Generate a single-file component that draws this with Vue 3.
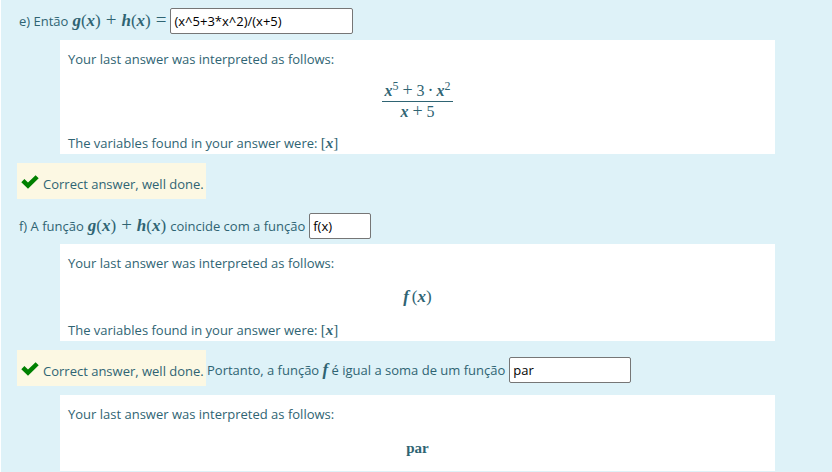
<script setup>
import { ref } from 'vue'

const sumAnswer = ref('(x^5+3*x^2)/(x+5)')
const functionAnswer = ref('f(x)')
const parityAnswer = ref('par')
</script>

<template>
  <main class="question">
    <div class="line first">
      <label for="sum">e) Então</label>
      <span class="math"><i>g</i>(<i>x</i>)<b class="op">+</b><i>h</i>(<i>x</i>)<b class="op last">=</b></span>
      <input id="sum" v-model="sumAnswer" class="wide" type="text" />
    </div>

    <section class="panel">
      <p>Your last answer was interpreted as follows:</p>
      <div class="display tall">
        <div class="math fraction">
          <span class="top"><i>x</i><sup>5</sup><b class="op">+</b>3<b class="op dot">·</b><i>x</i><sup>2</sup></span>
          <span class="bottom"><i>x</i><b class="op">+</b>5</span>
        </div>
      </div>
      <p>The variables found in your answer were: <span class="math small">[<i>x</i>]</span></p>
    </section>

    <div class="line result">
      <div class="feedback">
        <svg viewBox="0 0 18 14" aria-hidden="true"><path d="M0.3 7.2 3.4 4.1 7 7.4 14.6 0.2 17.7 3.2 7 13.8Z" /></svg>
        <span>Correct answer, well done.</span>
      </div>
    </div>

    <div class="line second">
      <label for="function">f) A função</label>
      <span class="math"><i>g</i>(<i>x</i>)<b class="op">+</b><i>h</i>(<i>x</i>)</span>
      <span>coincide com a função</span>
      <input id="function" v-model="functionAnswer" class="narrow" type="text" />
    </div>

    <section class="panel">
      <p>Your last answer was interpreted as follows:</p>
      <div class="display"><span class="math"><i>f</i>&#8202;&#8202;(<i>x</i>)</span></div>
      <p>The variables found in your answer were: <span class="math small">[<i>x</i>]</span></p>
    </section>

    <div class="line result">
      <div class="feedback">
        <svg viewBox="0 0 18 14" aria-hidden="true"><path d="M0.3 7.2 3.4 4.1 7 7.4 14.6 0.2 17.7 3.2 7 13.8Z" /></svg>
        <span>Correct answer, well done.</span>
      </div>
      <div class="sentence">
        <label for="parity">Portanto, a função <span class="math"><i>f</i></span> é igual a soma de um função</label>
        <input id="parity" v-model="parityAnswer" class="medium" type="text" />
      </div>
    </div>

    <section class="panel">
      <p>Your last answer was interpreted as follows:</p>
      <div class="display"><span class="math word">par</span></div>
    </section>
  </main>
</template>

<style>
body {
  background: #fff;
}
</style>

<style scoped>
.question {
  margin-left: 1px;
  padding-bottom: 1px;
  background: #def2f8;
  color: #2f6473;
  font-family: "Open Sans", "Segoe UI", sans-serif;
  font-size: 13px;
  line-height: 20px;
}

.line {
  display: flex;
  box-sizing: border-box;
  align-items: center;
  gap: 4px;
  padding-left: 18px;
  white-space: nowrap;
}

.first {
  height: 40px;
  padding-top: 1px;
}

.second {
  height: 36px;
}

.result {
  gap: 1px;
  padding: 9px 0 9px 16px;
}

.sentence {
  display: flex;
  align-items: center;
  gap: 4px;
  padding-top: 4px;
}

.feedback {
  display: flex;
  flex: none;
  box-sizing: border-box;
  align-items: center;
  gap: 4px;
  width: 189px;
  height: 36px;
  padding: 5px 0 0 4px;
  background: #fcf8e3;
}

.feedback svg {
  flex: none;
  width: 18px;
  height: 14px;
  margin-bottom: 4px;
  fill: #008000;
}

input {
  box-sizing: border-box;
  height: 26px;
  padding: 1px 3px;
  border: 1px solid #767676;
  border-radius: 2px;
  background: #fff;
  color: #000;
  font: inherit;
}

.wide {
  width: 183px;
}

.medium {
  width: 122px;
}

.narrow {
  width: 62px;
}

.panel {
  margin: 0 57px 0 59px;
  padding: 9px 8px 0;
  background: #fff;
}

.panel p {
  height: 20px;
  margin: 0;
}

.display {
  display: flex;
  align-items: center;
  justify-content: center;
  height: 47px;
}

.tall {
  height: 64px;
}

.display + p {
  padding-bottom: 1px;
}

.math {
  font-family: "Liberation Serif", serif;
  font-size: 17px;
  line-height: 20px;
}

.math i {
  font-weight: 700;
}

.small {
  font-size: 15px;
  line-height: 0;
}

.op {
  margin: 0 5px;
  font-size: 19px;
  font-weight: 400;
  line-height: 0;
}

.last {
  margin-right: 0;
}

.fraction {
  display: flex;
  flex-direction: column;
  font-size: 16px;
  text-align: center;
}

.fraction .op {
  margin: 0 4px;
  font-size: 18px;
}

.fraction .dot {
  margin: 0 3px;
}

.top {
  padding: 0 2px;
  border-bottom: 1px solid currentColor;
}

.word {
  font-size: 15px;
  font-weight: 700;
}

sup {
  font-size: 12px;
  line-height: 0;
}
</style>
